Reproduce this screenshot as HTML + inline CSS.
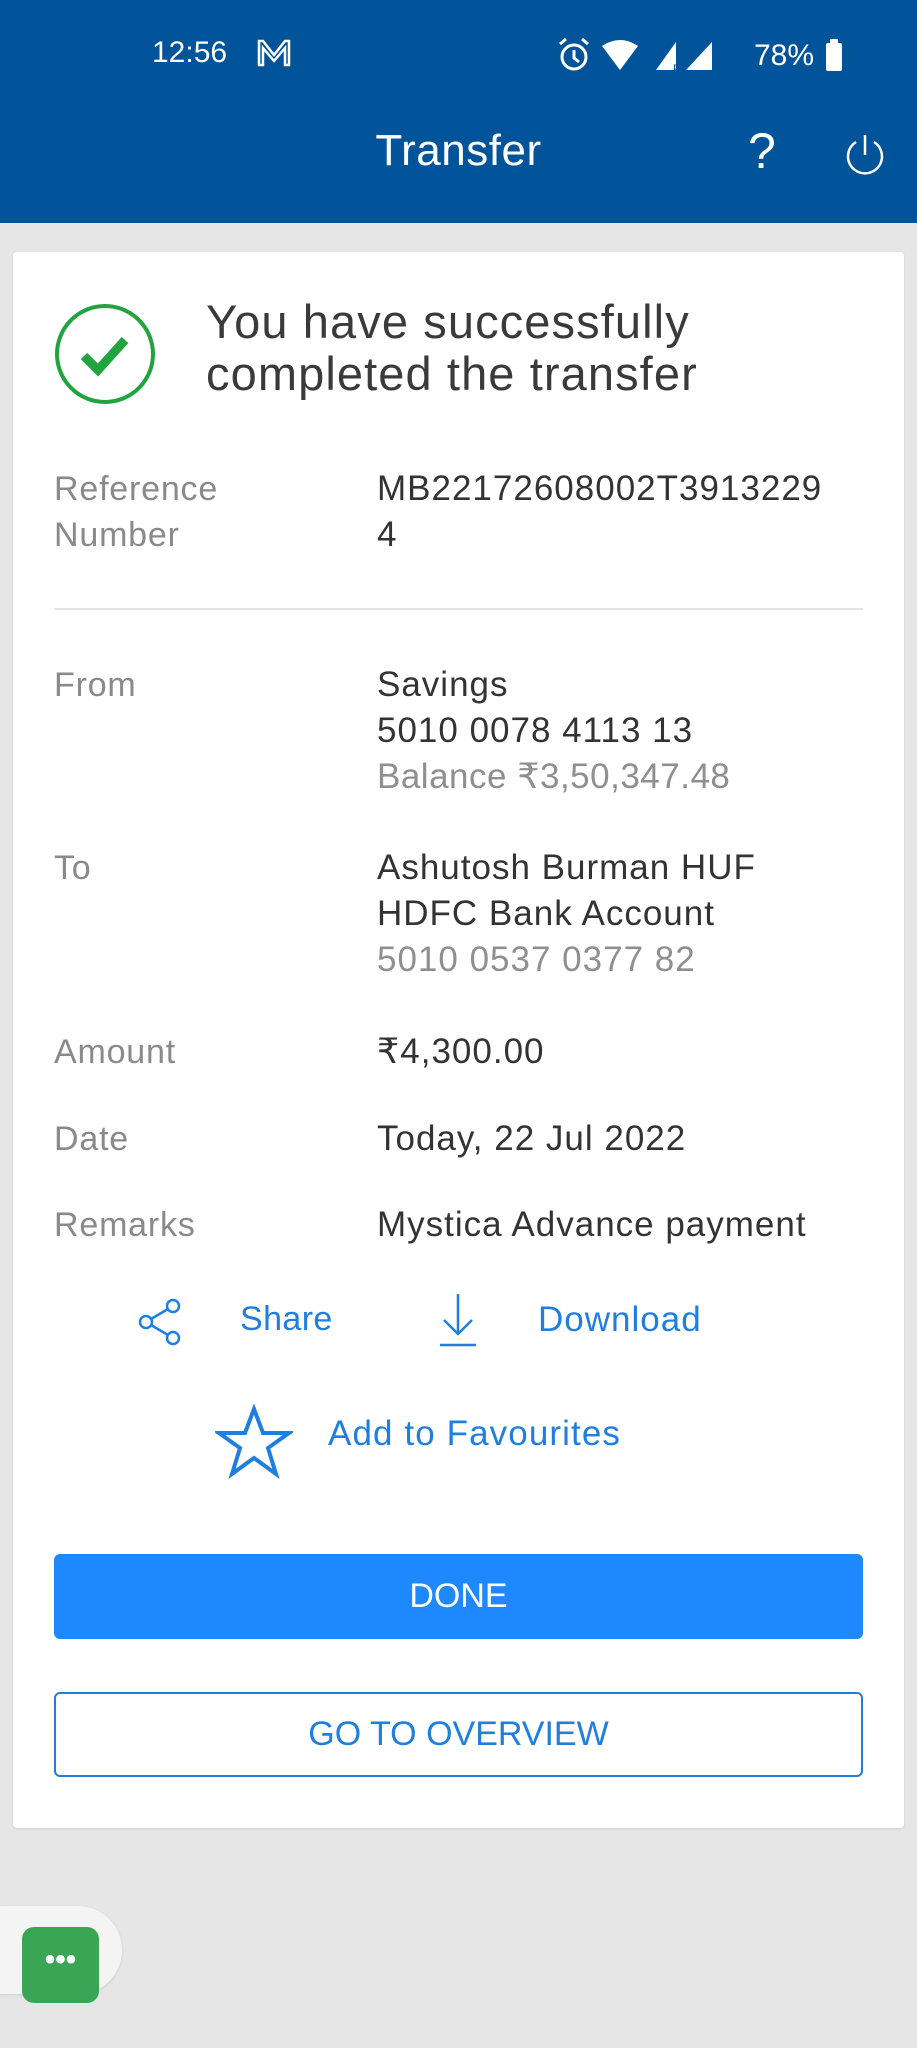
<!DOCTYPE html>
<html><head><meta charset="utf-8"><style>
*{margin:0;padding:0;box-sizing:border-box}
body{width:917px;height:2048px;background:#e6e6e6;font-family:"Liberation Sans",sans-serif;position:relative;overflow:hidden}
.hdr{position:absolute;left:0;top:0;width:917px;height:223px;background:#02549a;color:#fff}
.abs{position:absolute;white-space:nowrap}
.card{position:absolute;left:13px;top:252px;width:891px;height:1576px;background:#fff;border-radius:4px;box-shadow:0 1px 2px rgba(0,0,0,.1)}
.lbl{color:#8a8a8a;font-size:34px;letter-spacing:0.8px;left:54px;line-height:46px}
.val{color:#333;font-size:35px;letter-spacing:1px;left:377px;line-height:46px}
.g{color:#8f8f8f}
.blue{color:#1e7fe0}
</style></head><body>
<div class="hdr">
 <div class="abs" style="left:152px;top:36px;font-size:30px;">12:56</div>
 <svg class="abs" style="left:256px;top:38px" width="36" height="30" viewBox="0 0 36 30"><path d="M3 27V3h4l11 14L29 3h4v24h-4V10L18 23 7 10v17z" fill="none" stroke="#fff" stroke-width="2.5"/></svg>
 <svg class="abs" style="left:556px;top:36px" width="300" height="38" viewBox="0 0 300 38">
  <circle cx="18" cy="21" r="12" fill="none" stroke="#fff" stroke-width="3"/><path d="M18 14v8l5 4" stroke="#fff" stroke-width="3" fill="none"/><path d="M4 8l6-5M32 8l-6-5" stroke="#fff" stroke-width="3"/>
  <path d="M46 10q18-12 36 0l-18 24z" fill="#fff"/>
  <path d="M100 34L120 6v28z" fill="#fff"/><text x="117" y="37" font-size="12" fill="#02549a" font-family="Liberation Sans">R</text>
  <path d="M130 34L156 6v28z" fill="#fff"/>
  <text x="198" y="29" font-size="30" fill="#fff" font-family="Liberation Sans">78%</text>
  <rect x="270" y="7" width="16" height="28" rx="2" fill="#fff"/><rect x="274" y="3" width="8" height="5" fill="#fff"/>
 </svg>
 <div class="abs" style="left:0;width:917px;text-align:center;top:126px;font-size:44px;letter-spacing:0.5px">Transfer</div>
 <div class="abs" style="left:748px;top:122px;font-size:50px;font-weight:300">?</div>
 <svg class="abs" style="left:844px;top:132px" width="42" height="44" viewBox="0 0 42 44"><path d="M12 10A17 17 0 1 0 30 10" fill="none" stroke="#fff" stroke-width="2.5"/><path d="M21 3v20" stroke="#fff" stroke-width="2.5"/></svg>
</div>
<div class="card"></div>
<svg class="abs" style="left:53px;top:302px" width="104" height="104" viewBox="0 0 104 104"><circle cx="52" cy="52" r="48" fill="none" stroke="#21a33e" stroke-width="4"/><path d="M31 54l14 14 27-30" fill="none" stroke="#21a33e" stroke-width="9"/></svg>
<div class="abs" style="left:206px;top:296px;font-size:47px;letter-spacing:1.1px;line-height:52px;color:#3a3a3a">You have successfully<br>completed the transfer</div>
<div class="abs lbl" style="top:466px">Reference<br>Number</div>
<div class="abs val" style="top:466px">MB22172608002T3913229<br>4</div>
<div class="abs" style="left:54px;top:608px;width:809px;height:2px;background:#e4e4e4"></div>
<div class="abs lbl" style="top:662px">From</div>
<div class="abs val" style="top:662px">Savings<br>5010 0078 4113 13<br><span class="g" style="letter-spacing:0.5px">Balance ₹3,50,347.48</span></div>
<div class="abs lbl" style="top:845px">To</div>
<div class="abs val" style="top:845px">Ashutosh Burman HUF<br>HDFC Bank Account<br><span class="g">5010 0537 0377 82</span></div>
<div class="abs lbl" style="top:1029px">Amount</div>
<div class="abs val" style="top:1029px">₹4,300.00</div>
<div class="abs lbl" style="top:1116px">Date</div>
<div class="abs val" style="top:1116px">Today, 22 Jul 2022</div>
<div class="abs lbl" style="top:1202px">Remarks</div>
<div class="abs val" style="top:1202px">Mystica Advance payment</div>
<svg class="abs" style="left:136px;top:1297px" width="50" height="50" viewBox="0 0 50 50"><g fill="none" stroke="#1e7fe0" stroke-width="2.5"><circle cx="37" cy="9" r="6"/><circle cx="10" cy="25" r="6"/><circle cx="37" cy="41" r="6"/><path d="M15 22l17-10M15 28l17 10"/></g></svg>
<div class="abs blue" style="left:240px;top:1300px;font-size:34px;letter-spacing:0.4px">Share</div>
<svg class="abs" style="left:436px;top:1292px" width="44" height="56" viewBox="0 0 44 56"><g fill="none" stroke="#1e7fe0" stroke-width="2.5"><path d="M22 2v40M8 28l14 14 14-14M4 53h36"/></g></svg>
<div class="abs blue" style="left:538px;top:1300px;font-size:35px;letter-spacing:1px">Download</div>
<svg class="abs" style="left:215px;top:1404px" width="78" height="78" viewBox="0 0 78 78"><path d="M39 5l9 24h26l-21 15 8 26-22-16-22 16 8-26L4 29h26z" fill="none" stroke="#1e7fe0" stroke-width="4" stroke-linejoin="miter"/></svg>
<div class="abs blue" style="left:328px;top:1414px;font-size:35px;letter-spacing:1.1px">Add to Favourites</div>
<div class="abs" style="left:54px;top:1554px;width:809px;height:85px;background:#1e88ff;border-radius:6px;color:#fff;font-size:34px;text-align:center;line-height:85px">DONE</div>
<div class="abs" style="left:54px;top:1692px;width:809px;height:85px;border:2px solid #1e7fe0;border-radius:6px;color:#1e7fe0;font-size:34px;text-align:center;line-height:81px">GO TO OVERVIEW</div>
<div class="abs" style="left:-40px;top:1906px;width:162px;height:88px;background:#f4f4f4;border-radius:44px;box-shadow:0 1px 3px rgba(0,0,0,.1)"></div>
<div class="abs" style="left:22px;top:1927px;width:77px;height:76px;background:#3aa655;border-radius:12px"></div>
<div class="abs" style="left:22px;top:1927px;width:77px;height:76px;color:#fff;font-size:30px;text-align:center;line-height:66px;font-weight:bold">•••</div>
</body></html>
